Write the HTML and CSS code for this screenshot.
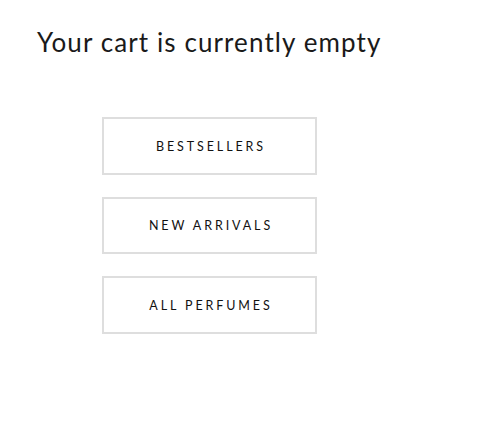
FILE: index.html
```html
<!DOCTYPE html>
<html>
<head>
<meta charset="utf-8">
<link rel="stylesheet" href="styles.css">
</head>
<body>
<div class="cart">
  <h1 class="cart-title">Your cart is currently empty</h1>
  <div class="links">
    <a class="link-btn" href="#">BESTSELLERS</a>
    <a class="link-btn" href="#">NEW ARRIVALS</a>
    <a class="link-btn" href="#">ALL PERFUMES</a>
  </div>
</div>
</body>
</html>
```
FILE: styles.css
```css
html, body {
  margin: 0;
  padding: 0;
  background: #fff;
}
body {
  font-family: "Lato", "Noto Sans", sans-serif;
  color: #1a1a1a;
}
.cart {
  padding: 26px 0 0 37px;
}
.cart-title {
  margin: 0;
  font-size: 26px;
  font-weight: 400;
  letter-spacing: 1.1px;
  line-height: 32px;
}
.links {
  display: flex;
  flex-direction: column;
  gap: 22px;
  margin: 59px 0 0 65px;
}
.link-btn {
  box-sizing: border-box;
  display: flex;
  align-items: center;
  justify-content: center;
  width: 215px;
  height: 57.5px;
  border: 2px solid #dedede;
  font-size: 12.5px;
  letter-spacing: 2.9px;
  color: #111;
  text-decoration: none;
  padding: 1px 0 0 3px;
}
```
